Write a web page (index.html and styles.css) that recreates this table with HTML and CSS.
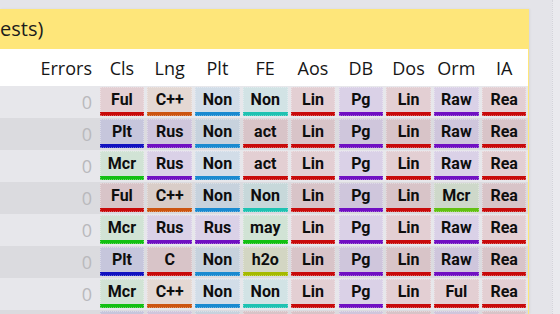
FILE: index.html
```html
<!DOCTYPE html>
<html>
<head>
<meta charset="utf-8">
<link rel="stylesheet" href="styles.css">
</head>
<body>
<div class="page">
  <div class="panel">
    <div class="title"><span class="title-text">ests)</span></div>
    <div class="table">
      <div class="row head">
        <div class="err">Errors</div>
        <div class="h">Cls</div><div class="h">Lng</div><div class="h">Plt</div><div class="h">FE</div><div class="h">Aos</div><div class="h">DB</div><div class="h">Dos</div><div class="h">Orm</div><div class="h">IA</div>
      </div>
      <div class="row light">
        <div class="err zero">0</div>
        <div class="c"><span class="tag red">Ful</span></div><div class="c"><span class="tag orange">C++</span></div><div class="c"><span class="tag blue">Non</span></div><div class="c"><span class="tag teal">Non</span></div><div class="c"><span class="tag red">Lin</span></div><div class="c"><span class="tag purple">Pg</span></div><div class="c"><span class="tag red">Lin</span></div><div class="c"><span class="tag purple">Raw</span></div><div class="c"><span class="tag red">Rea</span></div>
      </div>
      <div class="row dark">
        <div class="err zero">0</div>
        <div class="c"><span class="tag navy">Plt</span></div><div class="c"><span class="tag purple">Rus</span></div><div class="c"><span class="tag blue">Non</span></div><div class="c"><span class="tag red">act</span></div><div class="c"><span class="tag red">Lin</span></div><div class="c"><span class="tag purple">Pg</span></div><div class="c"><span class="tag red">Lin</span></div><div class="c"><span class="tag purple">Raw</span></div><div class="c"><span class="tag red">Rea</span></div>
      </div>
      <div class="row light">
        <div class="err zero">0</div>
        <div class="c"><span class="tag green">Mcr</span></div><div class="c"><span class="tag purple">Rus</span></div><div class="c"><span class="tag blue">Non</span></div><div class="c"><span class="tag red">act</span></div><div class="c"><span class="tag red">Lin</span></div><div class="c"><span class="tag purple">Pg</span></div><div class="c"><span class="tag red">Lin</span></div><div class="c"><span class="tag purple">Raw</span></div><div class="c"><span class="tag red">Rea</span></div>
      </div>
      <div class="row dark">
        <div class="err zero">0</div>
        <div class="c"><span class="tag red">Ful</span></div><div class="c"><span class="tag orange">C++</span></div><div class="c"><span class="tag blue">Non</span></div><div class="c"><span class="tag teal">Non</span></div><div class="c"><span class="tag red">Lin</span></div><div class="c"><span class="tag purple">Pg</span></div><div class="c"><span class="tag red">Lin</span></div><div class="c"><span class="tag lime">Mcr</span></div><div class="c"><span class="tag red">Rea</span></div>
      </div>
      <div class="row light">
        <div class="err zero">0</div>
        <div class="c"><span class="tag green">Mcr</span></div><div class="c"><span class="tag purple">Rus</span></div><div class="c"><span class="tag purple">Rus</span></div><div class="c"><span class="tag green">may</span></div><div class="c"><span class="tag red">Lin</span></div><div class="c"><span class="tag purple">Pg</span></div><div class="c"><span class="tag red">Lin</span></div><div class="c"><span class="tag purple">Raw</span></div><div class="c"><span class="tag red">Rea</span></div>
      </div>
      <div class="row dark">
        <div class="err zero">0</div>
        <div class="c"><span class="tag navy">Plt</span></div><div class="c"><span class="tag red">C</span></div><div class="c"><span class="tag blue">Non</span></div><div class="c"><span class="tag olive">h2o</span></div><div class="c"><span class="tag red">Lin</span></div><div class="c"><span class="tag purple">Pg</span></div><div class="c"><span class="tag red">Lin</span></div><div class="c"><span class="tag purple">Raw</span></div><div class="c"><span class="tag red">Rea</span></div>
      </div>
      <div class="row light">
        <div class="err zero">0</div>
        <div class="c"><span class="tag green">Mcr</span></div><div class="c"><span class="tag orange">C++</span></div><div class="c"><span class="tag blue">Non</span></div><div class="c"><span class="tag teal">Non</span></div><div class="c"><span class="tag red">Lin</span></div><div class="c"><span class="tag purple">Pg</span></div><div class="c"><span class="tag red">Lin</span></div><div class="c"><span class="tag red">Ful</span></div><div class="c"><span class="tag red">Rea</span></div>
      </div>
      <div class="row dark">
        <div class="err"></div>
        <div class="c"><span class="tag navy"></span></div><div class="c"><span class="tag purple"></span></div><div class="c"><span class="tag blue"></span></div><div class="c"><span class="tag red"></span></div><div class="c"><span class="tag red"></span></div><div class="c"><span class="tag purple"></span></div><div class="c"><span class="tag red"></span></div><div class="c"><span class="tag purple"></span></div><div class="c"><span class="tag red"></span></div>
      </div>
    </div>
  </div>
  <div class="gutter"></div>
</div>
</body>
</html>
```

FILE: styles.css
```css
html, body {
  margin: 0;
  padding: 0;
}
body {
  background: #e4e4e9;
  height: 314px;
  overflow: hidden;
  font-family: "Open Sans", "Liberation Sans", sans-serif;
  color: #1c1c1c;
}
.page {
  display: flex;
  padding-top: 9px;
  height: 305px;
}
.panel {
  width: 528px;
  padding-right: 1px;
  background: #fee67a;
  flex: none;
  box-shadow: 1px 0 2px rgba(0, 0, 0, 0.06);
}
.title {
  height: 40px;
  line-height: 40px;
  font-size: 20px;
  white-space: nowrap;
}
.title-text {
  display: inline-block;
}
.table {
  width: 528px;
}
.row {
  display: grid;
  grid-template-columns: 98px repeat(9, 1fr);
  height: 32px;
}
.row.head {
  background: #ffffff;
  height: 37px;
  align-items: center;
  font-size: 18px;
  color: #161616;
}
.row.light { background: #e7e7eb; }
.row.dark { background: #dbdbdf; }
.err {
  text-align: right;
  padding-right: 6px;
}
.h {
  text-align: center;
}
.zero {
  font-size: 18px;
  color: #b9b9bc;
  line-height: 32px;
}
.c {
  padding: 1px 1.6px 2px 1.7px;
  display: flex;
}
.tag {
  flex: 1;
  display: flex;
  align-items: center;
  justify-content: center;
  font-family: Roboto, "Liberation Sans", sans-serif;
  font-weight: 700;
  font-size: 16px;
  color: #0e0e0e;
  border-bottom: 4px solid;
  box-sizing: border-box;
  outline: 1px dotted rgba(255, 255, 255, 0.35);
  outline-offset: -1px;
}
.red { background: rgba(200, 0, 0, 0.1); border-color: #c80a0a; }
.orange { background: rgba(204, 85, 0, 0.1); border-color: #cc5510; }
.blue { background: rgba(26, 138, 208, 0.1); border-color: #1a8ad0; }
.teal { background: rgba(32, 192, 176, 0.1); border-color: #1fc2b2; }
.purple { background: rgba(112, 16, 192, 0.1); border-color: #7010c2; }
.navy { background: rgba(16, 16, 192, 0.1); border-color: #1212c0; }
.green { background: rgba(16, 192, 16, 0.1); border-color: #12c012; }
.lime { background: rgba(96, 192, 16, 0.1); border-color: #62c012; }
.olive { background: rgba(160, 184, 0, 0.12); border-color: #a6ba00; }
.gutter {
  margin-left: 23px;
  flex: 1;
  margin-top: -9px;
  border-left: 1px dotted #d4d4da;
  background: #eaeaee;
}
```
